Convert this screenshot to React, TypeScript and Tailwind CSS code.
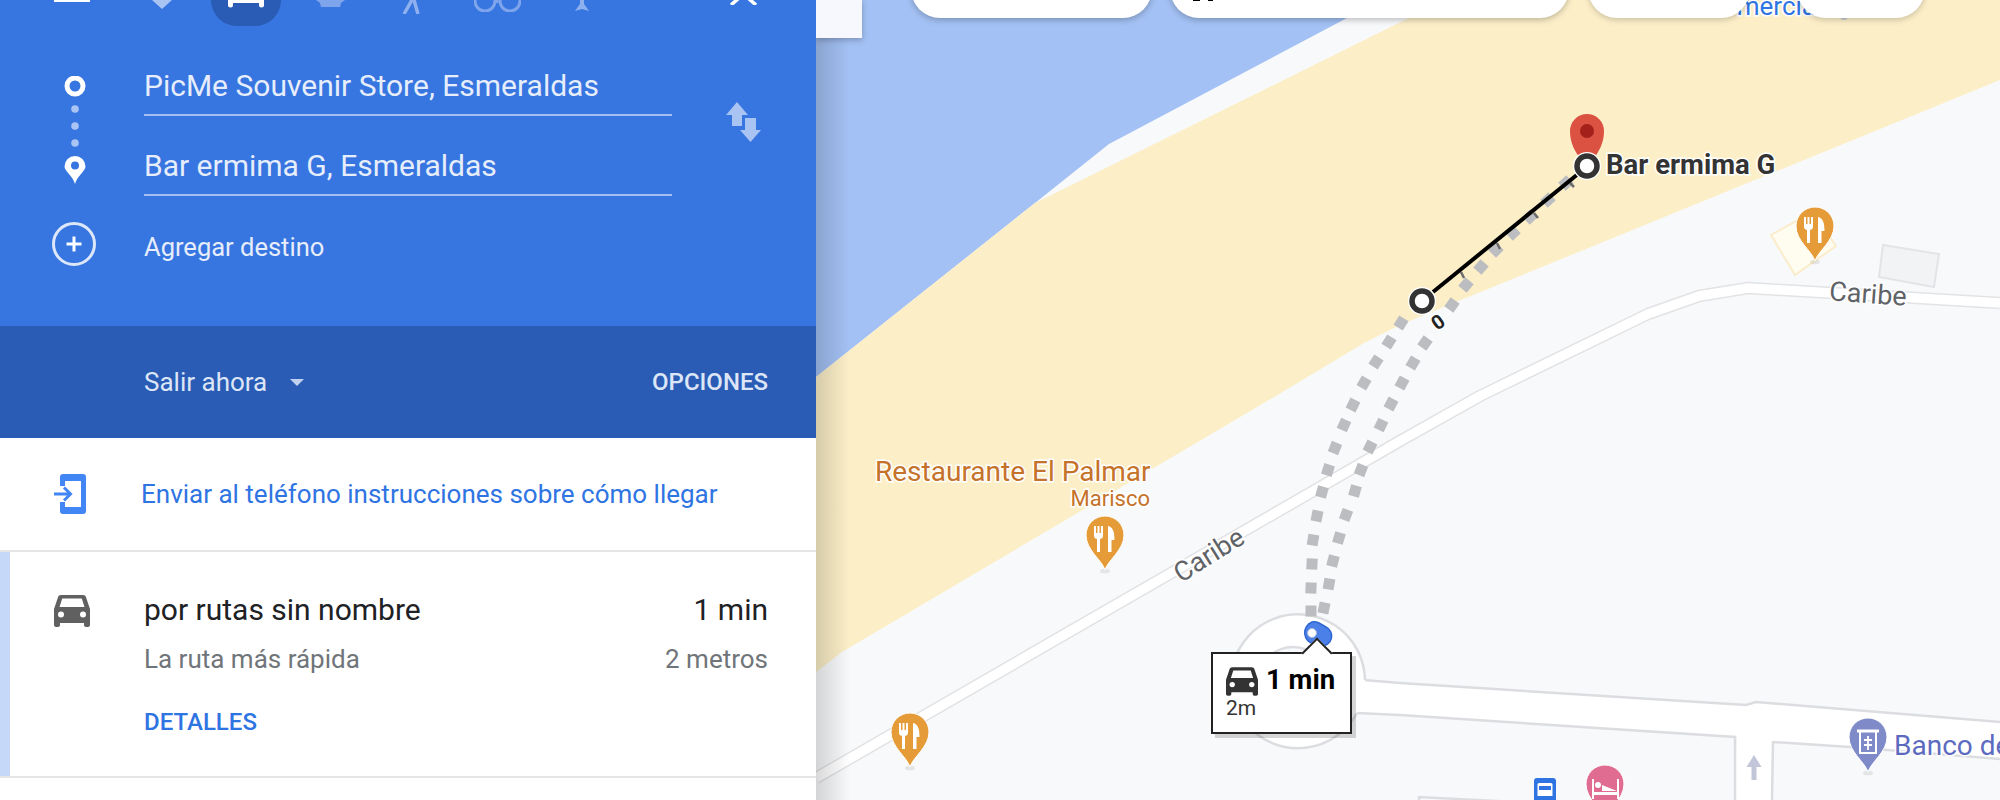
import * as React from "react";

// squares of the two dotted driving routes, page coordinates
const routeLeft: [number, number][] = [
  [1311, 611], [1311, 588], [1312, 564], [1313, 540], [1317, 516], [1322, 492], [1328, 470], [1335, 448],
  [1344, 425], [1353, 405], [1364, 383], [1376, 362], [1389, 342], [1401, 323],
];
const routeRight: [number, number][] = [
  [1324, 608], [1329, 584], [1333, 561], [1339, 538], [1346, 515], [1355, 491], [1361, 470], [1370, 447],
  [1381, 425], [1391, 404], [1402, 383], [1413, 363], [1425, 343], [1452, 305], [1466, 285], [1481, 267],
  [1496, 250], [1513, 233], [1530, 217], [1548, 200], [1566, 183],
];

const pinPath = "M0 54C-3 44-19 34-19 19A19 19 0 1 1 19 19C19 34 3 44 0 54Z";

const Pin = ({x, y, color, children}: {x: number; y: number; color: string; children?: React.ReactNode}) => (
  <g transform={`translate(${x} ${y})`}>
    <ellipse cx="0" cy="55" rx="5" ry="2.5" fill="#000" opacity="0.08" />
    <path d={pinPath} fill={color} stroke="#fff" strokeWidth="1" />
    {children}
  </g>
);

const Cutlery = () => (
  <g fill="#fff">
    <path d="M-11 10v9.5a3.5 3.5 0 0 0 3 3.5v13h3V23a3.5 3.5 0 0 0 3-3.5V10h-2v7H-5.5v-7h-2v7H-9v-7z" />
    <path d="M3 36V10c5 1 6.5 6 6.5 14H6.5v12z" />
  </g>
);

const Route = ({points}: {points: [number, number][]}) => (
  <g fill="#bcbdc0">
    {points.map(([x, y], i) => {
      const next = points[i + 1] ?? points[i - 1];
      const angle = (Math.atan2(next[1] - y, next[0] - x) * 180) / Math.PI;
      return <rect key={i} x={x - 5.5} y={y - 5.5} width="11" height="11" transform={`rotate(${angle} ${x} ${y})`} />;
    })}
  </g>
);

const Ring = ({x, y}: {x: number; y: number}) => (
  <g>
    <circle cx={x} cy={y} r="14" fill="#fff" />
    <circle cx={x} cy={y} r="10" fill="#fff" stroke="#333" strokeWidth="5.500" />
  </g>
);

const CarIcon = ({className}: {className: string}) => (
  <svg viewBox="0 0 36 32" className={className} fill="currentColor">
    <path d="M7 0h22c1.500 0 2.600 .9 3 2.200L36 14v16a2 2 0 0 1-2 2h-2a2 2 0 0 1-2-2v-2H6v2a2 2 0 0 1-2 2H2a2 2 0 0 1-2-2V14L4 2.200C4.400 .9 5.500 0 7 0zM5.500 12h25L27.800 3.500H8.200z" fillRule="evenodd" />
    <circle cx="7" cy="19.500" r="3" fill="#fff" />
    <circle cx="29" cy="19.500" r="3" fill="#fff" />
  </svg>
);

const MapLayer = () => (
  <svg viewBox="816 0 1184 800" className="absolute inset-0 w-full h-full">
    <polygon points="816,0 1381,0 1109,144 1035,203 816,377" fill="#a3c1f4" />
    <polygon points="816,377 1035,203 1445,0 2000,0 2000,80 1400,325 1364,343 1269,400 842,652 816,672" fill="#fcefc8" />

    {/* roads */}
    <g fill="none" strokeLinejoin="round">
      <polyline points="816,778 1400,441 1480,396 1648,314 1699,296 1748,288 2000,303" stroke="#e2e3e5" strokeWidth="12.500" />
      <polyline points="816,778 1400,441 1480,396 1648,314 1699,296 1748,288 2000,303" stroke="#fff" strokeWidth="9.500" />
    </g>
    <polygon
      points="1357,680 1400,683 1746,705 1756,702 2000,722 2000,759 1850,747 1772,742 1772,800 1735,800 1737,737 1400,715 1357,713"
      fill="#fff"
    />
    <g fill="none" stroke="#dcdde1" strokeWidth="2.500">
      <polyline points="1364,680 1400,683 1746,705 1756,702 2000,722" />
      <polyline points="1357,713 1400,715 1735,737 1735,800" />
      <polyline points="1772,800 1773,742 1850,747 2000,759" />
      <polyline points="1419,800 1419,797 1535,803" />
    </g>
    <path d="M1365 680A67 67 0 1 0 1357 713" fill="#fff" stroke="#dcdde1" strokeWidth="2.500" />
    <circle cx="1293" cy="681" r="34" fill="#f8f9fb" stroke="#dcdde1" strokeWidth="2.500" />

    {/* buildings */}
    <polygon points="1771,235 1795,275 1836,246 1812,212" fill="#fffcf0" stroke="#fbeccb" strokeWidth="2" />
    <polygon points="1883,245 1939,254 1934,287 1879,277" fill="#f1f3f4" stroke="#e3e4e7" strokeWidth="2" />

    <path d="M1754 755l7.500 12h-5v13h-5v-13h-5z" fill="#c3c6d9" />

    <Route points={routeLeft} />
    <Route points={routeRight} />

    {/* measure line */}
    <g stroke="#6b6b6b" strokeWidth="2.500">
      <line x1="1461" y1="272" x2="1464" y2="278" />
      <line x1="1497" y1="243" x2="1500" y2="249" />
      <line x1="1534" y1="213" x2="1538" y2="218" />
      <line x1="1570" y1="183" x2="1574" y2="187" />
    </g>
    <line x1="1433" y1="292" x2="1578" y2="174" stroke="#000" strokeWidth="4" />
    <path d="M1587 172C1585 160 1570 152 1570 131A17 17 0 1 1 1604 131C1604 152 1589 160 1587 172Z" fill="#db5142" />
    <circle cx="1587" cy="131" r="7" fill="#a3211a" />
    <Ring x={1422} y={301} />
    <Ring x={1587} y={166} />
    <text
      x="1438"
      y="329"
      transform="rotate(-35 1438 322)"
      textAnchor="middle"
      fontSize="20"
      fontWeight="700"
      fill="#222"
      stroke="#fff"
      strokeWidth="2"
      style={{paintOrder: "stroke"}}
      className="font-['Roboto',sans-serif]"
    >
      0
    </text>

    {/* start marker */}
    <path d="M1312 622a11 11 0 0 1 7 1l7 4a10 10 0 0 1-5 19l-7-2a11.500 11.500 0 0 1-2-22z" fill="#4a80e8" stroke="#2f66cf" strokeWidth="1.500" />
    <circle cx="1312" cy="633" r="4.500" fill="#fff" stroke="#a9b9d8" strokeWidth="1" />

    {/* pins */}
    <Pin x={1105} y={516} color="#e59b37"><Cutlery /></Pin>
    <Pin x={910} y={713} color="#e59b37"><Cutlery /></Pin>
    <Pin x={1815} y={207} color="#e59b37"><Cutlery /></Pin>
    <Pin x={1868} y={718} color="#7f8bc9">
      <g fill="none" stroke="#fff" strokeWidth="2">
        <path d="M-11 13H11" strokeWidth="3" />
        <path d="M-8 13V35H8V13" />
        <path d="M-4 22H4M-4 27H4M0 18V32" strokeWidth="1.800" />
      </g>
    </Pin>
    <Pin x={1605} y={765} color="#e06c91">
      <g fill="#fff">
        <rect x="-13" y="14" width="2" height="20" />
        <rect x="12" y="14" width="2" height="20" />
        <rect x="-13" y="27" width="26" height="3" />
        <circle cx="-7" cy="20" r="3" />
        <path d="M-3 20l15 6H-3z" />
      </g>
    </Pin>
    <rect x="1534" y="778" width="22" height="26" rx="3" fill="#2f74e3" />
    <g fill="#fff">
      <path d="M1539 783h12a1.500 1.500 0 0 1 1.500 1.500V796h-15v-11.500a1.500 1.500 0 0 1 1.500-1.500z" />
      <rect x="1539" y="786" width="12" height="4" fill="#2f74e3" />
    </g>

    <circle cx="1844" cy="16" r="4" fill="#c7c9cf" />

    {/* labels */}
    <g className="font-['Roboto',sans-serif]" stroke="#fff" style={{paintOrder: "stroke"}}>
      <text x="1606" y="174" fontSize="27.500" fontWeight="700" fill="#333" strokeWidth="3" style={{paintOrder: "stroke"}}>Bar ermima G</text>
      <text x="875" y="481" fontSize="28" fill="#c5722a" strokeWidth="3" style={{paintOrder: "stroke"}}>Restaurante El Palmar</text>
      <text x="1150" y="506" textAnchor="end" fontSize="22" fill="#c5722a" strokeWidth="3" style={{paintOrder: "stroke"}}>Marisco</text>
      <text x="1209" y="564" transform="rotate(-32 1209 555)" textAnchor="middle" fontSize="27" fill="#5f6368" strokeWidth="3" style={{paintOrder: "stroke"}}>Caribe</text>
      <text x="1868" y="303" transform="rotate(4 1868 295)" textAnchor="middle" fontSize="27" fill="#5f6368" strokeWidth="3" style={{paintOrder: "stroke"}}>Caribe</text>
      <text x="1894" y="755" fontSize="28" fill="#5c6bc0" strokeWidth="3" style={{paintOrder: "stroke"}}>Banco de</text>
      <text x="1705" y="15" fontSize="26" fill="#2f74e3" strokeWidth="3" style={{paintOrder: "stroke"}}>Comercial</text>
    </g>
  </svg>
);

const Callout = () => (
  <div className="absolute left-[395px] top-[652px] w-[141px] h-[82px] bg-white border-[2.5px] border-[#222] shadow-[4px_4px_0_rgba(0,0,0,0.16)] font-['Roboto',sans-serif]">
    <div className="absolute left-[93px] -top-[12px] w-[22px] h-[22px] rotate-45 bg-white border-l-[2.5px] border-t-[2.5px] border-[#222]" />
    <div className="relative flex items-center gap-[8px] pl-[13px] pt-[13px]">
      <CarIcon className="w-[32px] h-[29px] text-[#333]" />
      <span className="text-[27.5px] leading-[28px] font-bold text-black -mt-[4px]">1 min</span>
    </div>
    <div className="relative pl-[13px] text-[21px] leading-[24px] text-[#333]">2m</div>
  </div>
);

const App: React.FC = () => {
  return (
    <div className="flex w-[2000px] h-[800px] overflow-hidden bg-white font-['Roboto',sans-serif]">
      <aside className="relative z-10 w-[816px] shrink-0 flex flex-col bg-white">
        <div className="h-[326px] bg-[#3775e0] overflow-hidden">
          {/* travel modes, cut off by the top of the page */}
          <div className="flex h-[26px] items-start overflow-visible">
            <div className="ml-[54px] w-[36px] h-[2px] bg-white" />
            <svg viewBox="0 0 20 9" className="ml-[62px] w-[20px] h-[9px]"><path d="M0 0H20L10 9Z" fill="#a9c3f3" /></svg>
            <div className="ml-[39px] w-[70px] h-[26px] rounded-b-[35px] bg-[#2a5cb5] flex justify-center">
              <svg viewBox="0 0 36 8" className="w-[36px] h-[8px]" fill="#fff">
                <path d="M0 0H36V5a2.500 2.500 0 0 1-5 0V3H5V5a2.500 2.500 0 0 1-5 0Z" />
              </svg>
            </div>
            <svg viewBox="0 0 29 8" className="ml-[35px] w-[29px] h-[8px]" fill="#7ea4ec"><path d="M0 0H29L25 3 24 7H5L4 3Z" /></svg>
            <svg viewBox="0 0 18 14" className="ml-[57px] w-[18px] h-[14px]" fill="none" stroke="#8fb0ee" strokeWidth="3.500"><path d="M10 0 2 14M12 0 16 14" /></svg>
            <svg viewBox="0 0 47 12" className="ml-[54px] w-[47px] h-[12px]" fill="none" stroke="#7ea4ec" strokeWidth="3"><circle cx="11" cy="1" r="10" /><circle cx="36" cy="1" r="10" /><path d="M23 0v3" /></svg>
            <svg viewBox="0 0 14 11" className="ml-[54px] w-[14px] h-[11px]" fill="#8fb0ee"><path d="M5 0H9V4L14 11 7 9 0 11 5 4Z" /></svg>
            <svg viewBox="0 0 27 5" className="ml-[141px] w-[27px] h-[5px]" fill="none" stroke="#fff" strokeWidth="3.500"><path d="M9 -2 1 5M18 -2 26 5" /></svg>
          </div>

          <div className="flex">
            <div className="w-[144px] pl-[6px] flex flex-col items-center pt-[50px]">
              <svg viewBox="0 0 24 108" className="w-[24px] h-[108px]">
                <circle cx="12" cy="10" r="8" fill="none" stroke="#fff" strokeWidth="5" />
                <circle cx="12" cy="33" r="3.800" fill="#a9c3f3" />
                <circle cx="12" cy="50" r="3.800" fill="#a9c3f3" />
                <circle cx="12" cy="67" r="3.800" fill="#a9c3f3" />
                <path d="M12 108C10 100 1.500 95 1.500 90.500A10.500 10.500 0 1 1 22.500 90.500C22.500 95 14 100 12 108ZM12 85.500a4 4 0 1 0 0 8a4 4 0 0 0 0-8Z" fill="#fff" fillRule="evenodd" />
              </svg>
              <svg viewBox="0 0 44 44" className="w-[44px] h-[44px] mt-[38px] -ml-[2px]" fill="none">
                <circle cx="22" cy="22" r="20.500" stroke="#dde7fa" strokeWidth="3" />
                <path d="M22 14.500v15M14.500 22h15" stroke="#fff" strokeWidth="3" />
              </svg>
            </div>
            <div className="w-[528px] pt-[10px]">
              <div className="h-[80px] border-b-2 border-[#a4bff2] flex items-end pb-[10px] text-[30px] leading-[36px] text-[#e6edfb]">
                PicMe Souvenir Store, Esmeraldas
              </div>
              <div className="h-[80px] border-b-2 border-[#a4bff2] flex items-end pb-[10px] text-[30px] leading-[36px] text-[#e6edfb]">
                Bar ermima G, Esmeraldas
              </div>
              <div className="mt-[33px] text-[25.5px] leading-[36px] text-[#e6edfb]">Agregar destino</div>
            </div>
            <div className="ml-[54px] pt-[76px]">
              <svg viewBox="0 0 35 40" className="w-[35px] h-[40px]" fill="#a9c3f3">
                <path d="M11 0 22 13H16V24H6V13H0Z" />
                <path d="M19 16H30V28H35L24.500 40 14 28H19Z" />
              </svg>
            </div>
          </div>
        </div>

        <div className="h-[112px] bg-[#2a5cb5] flex items-center justify-between pl-[144px] pr-[48px] text-[#dde6f7]">
          <div className="flex items-center gap-[23px] -mt-[1px]">
            <span className="text-[26px] leading-[32px]">Salir ahora</span>
            <span className="w-0 h-0 border-l-[7px] border-r-[7px] border-t-[7px] border-l-transparent border-r-transparent border-t-[#c0d0ee] mt-[2px]" />
          </div>
          <span className="text-[24px] leading-[32px] font-medium">OPCIONES</span>
        </div>

        <div className="h-[114px] border-b-2 border-[#e6e6e6] flex items-center pl-[54px]">
          <svg viewBox="0 0 32 40" className="w-[32px] h-[40px]">
            <path d="M6 3a3 3 0 0 1 3-3h20a3 3 0 0 1 3 3v34a3 3 0 0 1-3 3H9a3 3 0 0 1-3-3V28h5v5h16V7H11v5H6Z" fill="#4285f4" />
            <path d="M0 20h15M10 13.500l6.500 6.500-6.500 6.500" fill="none" stroke="#4285f4" strokeWidth="3" />
          </svg>
          <span className="ml-[55px] -mt-[1px] text-[26px] leading-[32px] text-[#2f74e3]">Enviar al teléfono instrucciones sobre cómo llegar</span>
        </div>

        <div className="flex h-[226px] border-b-2 border-[#e6e6e6]">
          <div className="w-[10px] bg-[#c6d8f8]" />
          <div className="w-[134px] pl-[44px] pt-[43px]">
            <CarIcon className="w-[36px] h-[32px] text-[#606060]" />
          </div>
          <div className="flex-1 pr-[48px] pt-[38px]">
            <div className="flex justify-between text-[30px] leading-[40px] text-[#202124]">
              <span>por rutas sin nombre</span>
              <span>1 min</span>
            </div>
            <div className="flex justify-between mt-[13px] text-[26px] leading-[32px] text-[#70757a]">
              <span>La ruta más rápida</span>
              <span>2 metros</span>
            </div>
            <div className="mt-[31px] text-[24px] leading-[32px] font-medium text-[#2f74e3]">DETALLES</div>
          </div>
        </div>
      </aside>

      <main className="relative flex-1 overflow-hidden bg-[#f8f9fb]">
        <MapLayer />
        <div className="absolute inset-y-0 left-0 w-[34px] bg-linear-to-r from-black/15 to-transparent" />

        <div className="absolute left-0 top-0 w-[46px] h-[38px] bg-[#f6f8fd] shadow-[0_2px_6px_rgba(0,0,0,0.25)]" />

        <div className="absolute -top-[40px] left-[95px] flex">
          <div className="w-[241px] h-[58px] rounded-[30px] bg-white shadow-[0_2px_6px_rgba(0,0,0,0.25)]" />
          <div className="relative ml-[18px] w-[399px] h-[58px] rounded-[30px] bg-white shadow-[0_2px_6px_rgba(0,0,0,0.25)]">
            <span className="absolute left-[23px] bottom-[17px] w-[7px] h-px bg-black" />
            <span className="absolute left-[38px] bottom-[17px] w-[5px] h-px bg-black" />
          </div>
          <div className="ml-[19px] w-[162px] h-[58px] rounded-[30px] bg-white shadow-[0_2px_6px_rgba(0,0,0,0.2)]" />
          <div className="ml-[47px] w-[128px] h-[58px] rounded-[30px] bg-white shadow-[0_2px_6px_rgba(0,0,0,0.2)]" />
        </div>

        <Callout />
      </main>
    </div>
  );
};

export default App;
